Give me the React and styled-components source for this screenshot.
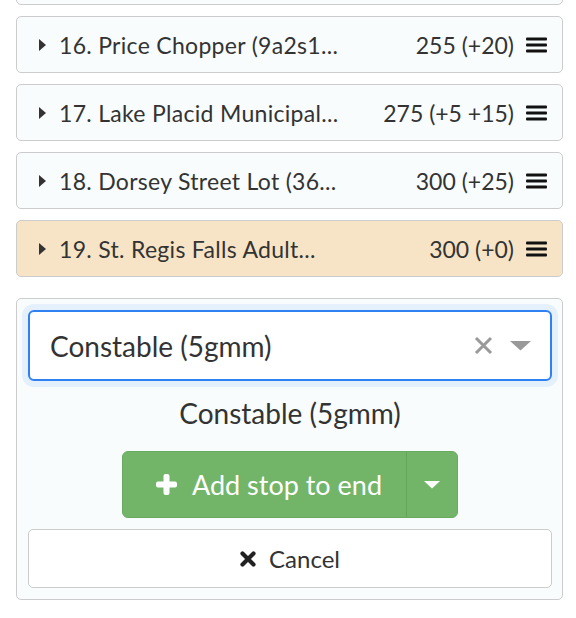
import React from "react";
import styled, { createGlobalStyle } from "styled-components";

const GlobalStyle = createGlobalStyle`
  html, body {
    margin: 0;
    padding: 0;
    background: #fff;
    font-family: Lato, "Noto Sans", sans-serif;
    color: #333;
  }
`;

const Page = styled.div`
  padding: 0 13px 0 16px;
  overflow: hidden;
  height: 618px;
  box-sizing: border-box;
`;

const StopList = styled.div`
  margin-top: -52px;
`;

const StopCard = styled.div`
  display: flex;
  align-items: center;
  height: 57px;
  box-sizing: border-box;
  margin-bottom: 11px;
  padding: 0 15px 0 22px;
  border: 1px solid #ccc;
  border-radius: 5px;
  background: ${(p) => (p.active ? "#f7e4c7" : "#f8fcfc")};
  font-size: 23px;
`;

const Caret = styled.span`
  width: 0;
  height: 0;
  border-top: 6px solid transparent;
  border-bottom: 6px solid transparent;
  border-left: 7px solid #333;
  margin-right: 13px;
  flex: none;
`;

const StopName = styled.span`
  flex: 1;
  white-space: nowrap;
  overflow: hidden;
  letter-spacing: 0.3px;
`;

const StopTime = styled.span`
  white-space: nowrap;
  margin-right: 12px;
`;

const Bars = () => (
  <svg width="21" height="18" viewBox="0 0 21 18">
    <rect x="0" y="1.5" width="21" height="3" rx="1" fill="#111" />
    <rect x="0" y="7.5" width="21" height="3" rx="1" fill="#111" />
    <rect x="0" y="13.5" width="21" height="3" rx="1" fill="#111" />
  </svg>
);

const AddPanel = styled.div`
  margin-top: 21px;
  border: 1px solid #ccc;
  border-radius: 5px;
  background: #f8fcfc;
  padding: 11px 10px 11px 11px;
`;

const SelectControl = styled.div`
  display: flex;
  align-items: center;
  height: 71px;
  box-sizing: border-box;
  border: 2px solid #2f80f2;
  border-radius: 6px;
  background: #fff;
  box-shadow: 0 0 0 6px #e4f0fc;
  padding: 0 19px 0 20px;
  font-size: 28px;
`;

const SelectValue = styled.span`
  flex: 1;
  white-space: nowrap;
`;

const Indicators = styled.span`
  display: flex;
  align-items: center;
  gap: 17px;
`;

const SelectedLabel = styled.div`
  text-align: center;
  font-size: 28px;
  line-height: 34px;
  margin: 15px 0 21px;
`;

const ButtonRow = styled.div`
  display: flex;
  justify-content: center;
  margin-bottom: 11px;
`;

const SplitButton = styled.div`
  display: flex;
  height: 67px;
  border-radius: 6px;
  overflow: hidden;
  background: #72b569;
  border: 1px solid #68ab5f;
  box-sizing: border-box;
`;

const GreenButton = styled.button`
  display: flex;
  align-items: center;
  justify-content: center;
  gap: 15px;
  border: 0;
  background: transparent;
  color: #fff;
  font-family: inherit;
  font-size: 27px;
  padding: ${(p) => (p.toggle ? "0 17px" : "0 24px 0 33px")};
  border-left: ${(p) => (p.toggle ? "1px solid #64a55c" : "0")};
`;

const CancelButton = styled.button`
  display: flex;
  align-items: center;
  justify-content: center;
  gap: 13px;
  width: 100%;
  height: 59px;
  box-sizing: border-box;
  border: 1px solid #ccc;
  border-radius: 5px;
  background: #fff;
  color: #333;
  font-family: inherit;
  font-size: 24px;
`;

const stops = [
  { id: 15 },
  { id: 16, name: "16. Price Chopper (9a2s1...", time: "255 (+20)" },
  { id: 17, name: "17. Lake Placid Municipal...", time: "275 (+5 +15)" },
  { id: 18, name: "18. Dorsey Street Lot (36...", time: "300 (+25)" },
  { id: 19, name: "19. St. Regis Falls Adult...", time: "300 (+0)", active: true },
];

export default function App() {
  return (
    <>
      <GlobalStyle />
      <Page>
        <StopList>
          {stops.map((s) => (
            <StopCard key={s.id} active={s.active}>
              {s.name && (
                <>
                  <Caret />
                  <StopName>{s.name}</StopName>
                  <StopTime>{s.time}</StopTime>
                  <Bars />
                </>
              )}
            </StopCard>
          ))}
        </StopList>
        <AddPanel>
          <SelectControl>
            <SelectValue>Constable (5gmm)</SelectValue>
            <Indicators>
              <svg width="19" height="19" viewBox="0 0 19 19">
                <path d="M2 2 L17 17 M17 2 L2 17" stroke="#999" strokeWidth="3" />
              </svg>
              <svg width="21" height="10" viewBox="0 0 21 10">
                <path d="M0 0 H21 L10.5 9.5 Z" fill="#999" />
              </svg>
            </Indicators>
          </SelectControl>
          <SelectedLabel>Constable (5gmm)</SelectedLabel>
          <ButtonRow>
            <SplitButton>
              <GreenButton>
                <svg width="21" height="21" viewBox="0 0 21 21">
                  <rect x="7.5" y="0" width="6" height="21" rx="2" fill="#fff" />
                  <rect x="0" y="7.5" width="21" height="6" rx="2" fill="#fff" />
                </svg>
                Add stop to end
              </GreenButton>
              <GreenButton toggle>
                <svg width="16" height="8" viewBox="0 0 16 8">
                  <path d="M0 0 H16 L8 7.5 Z" fill="#fff" />
                </svg>
              </GreenButton>
            </SplitButton>
          </ButtonRow>
          <CancelButton>
            <svg width="16" height="16" viewBox="0 0 16 16">
              <path d="M2.5 2.5 L13.5 13.5 M13.5 2.5 L2.5 13.5" stroke="#222" strokeWidth="4.2" strokeLinecap="round" />
            </svg>
            Cancel
          </CancelButton>
        </AddPanel>
      </Page>
    </>
  );
}
